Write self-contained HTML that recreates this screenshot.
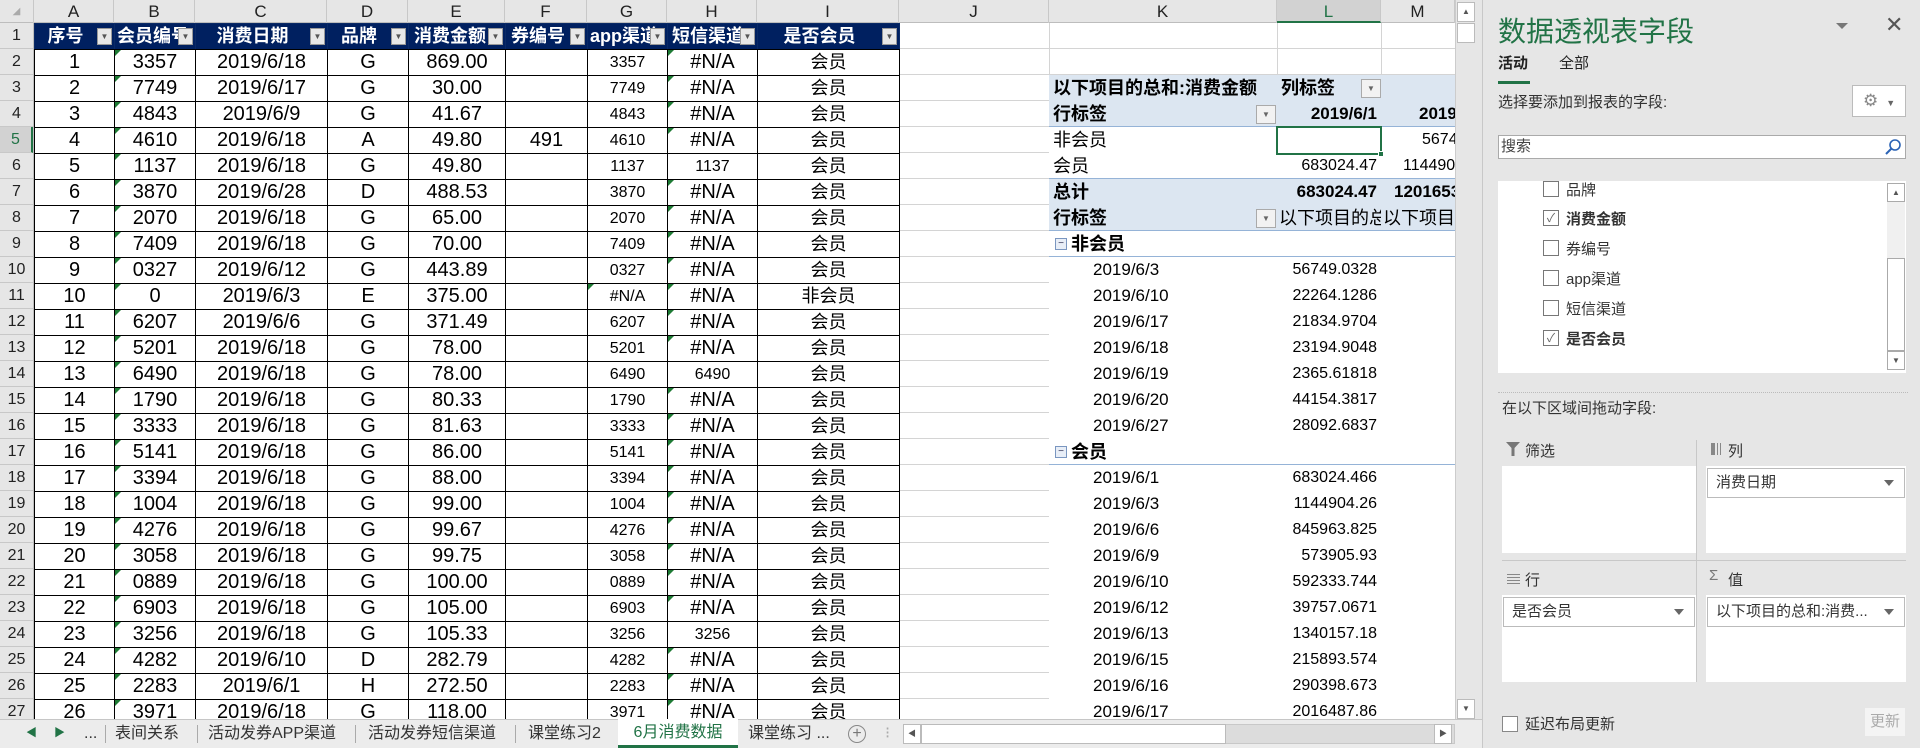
<!DOCTYPE html>
<html><head><meta charset="utf-8">
<style>
*{box-sizing:border-box;margin:0;padding:0}
body{width:1920px;height:748px;overflow:hidden;background:#fff;position:relative;font-family:"Liberation Sans","Noto Sans CJK SC",sans-serif;color:#000}
.abs{position:absolute}
#colhdr{left:0;top:0;width:1455px;height:23px;background:#e6e6e6;border-bottom:1px solid #bdbdbd}
.ch{position:absolute;top:0;height:23px;line-height:23px;text-align:center;font-size:17px;color:#222;border-right:1px solid #c8c8c8;font-family:"Liberation Sans Narrow","Liberation Sans",sans-serif}
#rowhdr{left:0;top:23px;width:34px;height:696px;background:#e6e6e6;border-right:1px solid #bdbdbd}
.rh{height:26px;line-height:26px;text-align:center;font-size:16px;color:#222;border-bottom:1px solid #c8c8c8;font-family:"Liberation Sans Narrow","Liberation Sans",sans-serif}
#grid{left:899px;top:23px;width:556px;height:696px;background:repeating-linear-gradient(to bottom,transparent 0,transparent 25px,#d4d4d4 25px,#d4d4d4 26px)}
.vl{position:absolute;top:23px;width:1px;height:696px;background:#d4d4d4}
table{position:absolute;left:34px;top:23px;width:865px;border-collapse:collapse;table-layout:fixed;font-family:"Liberation Sans","Noto Sans CJK SC",sans-serif}
td{height:25px;padding:0;border:1px solid #000;text-align:center;font-size:20px;white-space:nowrap;overflow:hidden;position:relative;line-height:25px}
td.g{font-size:16px}
td.i{font-size:18px}
tr.h td{background:#002060;color:#fff;font-weight:bold;font-size:18px;border-color:#0a2a66;border-bottom:1px solid #000;padding-right:18px;text-overflow:clip}
tr.h td b{position:absolute;right:2px;top:4px;width:15px;height:17px;background:#e8e8e8;border:1px solid #999;color:#555;font-size:8px;line-height:16px;text-align:center;font-weight:normal}
.t::before{content:"";position:absolute;left:0;top:0;border-top:6px solid #1e7b34;border-right:6px solid transparent}
.pv{position:absolute;font-size:18px;white-space:nowrap;line-height:26px;height:26px}
.nm{font-size:16px}
.bl{background:#dce6f1}
.dd{position:absolute;width:20px;height:19px;border:1px solid #aaa;background:#f2f2f2;font-size:8px;color:#666;text-align:center;line-height:18px}
.ps{position:absolute;font-size:17px;line-height:26px;white-space:nowrap}
.ps.v{font-size:16px}
#panel{left:1482px;top:0;width:438px;height:748px;background:#e6e6e6;border-left:1px solid #c8c8c8}
.cb{position:absolute;width:16px;height:16px;border:1px solid #777;background:#fff;font-size:12px;line-height:14px;text-align:center;color:#666}
.it{position:absolute;font-size:15px;color:#333;white-space:nowrap}
.box{position:absolute;background:#fff}
.fld{position:absolute;height:30px;border:1px solid #bbb;background:#fff;font-size:15px;line-height:28px;padding-left:8px;color:#333}
.fld i{position:absolute;right:10px;top:11px;border-top:6px solid #666;border-left:5px solid transparent;border-right:5px solid transparent}
#tabs{left:0;top:719px;width:1482px;height:29px;background:#ececec;border-top:1px solid #c6c6c6;font-size:16px;color:#333}
.tb{position:absolute;top:0;height:28px;line-height:27px;white-space:nowrap}
.sep{position:absolute;top:5px;width:1px;height:18px;background:#aaa}
</style></head><body>

<div id="colhdr" class="abs">
<div class="ch" style="left:0;width:34px;font-size:10px;color:#aaa">◢</div>
<div class="ch" style="left:34px;width:80px">A</div>
<div class="ch" style="left:114px;width:81px">B</div>
<div class="ch" style="left:195px;width:132px">C</div>
<div class="ch" style="left:327px;width:81px">D</div>
<div class="ch" style="left:408px;width:97px">E</div>
<div class="ch" style="left:505px;width:82px">F</div>
<div class="ch" style="left:587px;width:80px">G</div>
<div class="ch" style="left:667px;width:90px">H</div>
<div class="ch" style="left:757px;width:142px">I</div>
<div class="ch" style="left:899px;width:150px">J</div>
<div class="ch" style="left:1049px;width:228px">K</div>
<div class="ch" style="left:1277px;width:104px;background:#d2d2d2;border-bottom:2px solid #217346;color:#217346">L</div>
<div class="ch" style="left:1381px;width:74px">M</div>
</div>

<div id="rowhdr" class="abs">
<div class="rh">1</div><div class="rh">2</div><div class="rh">3</div><div class="rh">4</div>
<div class="rh" style="background:#d2d2d2;color:#217346;border-right:2px solid #217346">5</div>
<div class="rh">6</div><div class="rh">7</div><div class="rh">8</div><div class="rh">9</div><div class="rh">10</div>
<div class="rh">11</div><div class="rh">12</div><div class="rh">13</div><div class="rh">14</div><div class="rh">15</div>
<div class="rh">16</div><div class="rh">17</div><div class="rh">18</div><div class="rh">19</div><div class="rh">20</div>
<div class="rh">21</div><div class="rh">22</div><div class="rh">23</div><div class="rh">24</div><div class="rh">25</div>
<div class="rh">26</div><div class="rh">27</div>
</div>

<div id="grid" class="abs"></div>
<div class="vl" style="left:1049px"></div>
<div class="vl" style="left:1277px"></div>
<div class="vl" style="left:1381px"></div>

<table>
<colgroup><col style="width:80px"><col style="width:81px"><col style="width:132px"><col style="width:81px"><col style="width:97px"><col style="width:82px"><col style="width:80px"><col style="width:90px"><col style="width:142px"></colgroup>
<tr class="h"><td>序号<b>▼</b></td><td style="text-align:left;padding-left:2px">会员编号<b>▼</b></td><td>消费日期<b>▼</b></td><td>品牌<b>▼</b></td><td style="text-align:left;padding-left:5px">消费金额<b>▼</b></td><td style="text-align:left;padding-left:5px">券编号<b>▼</b></td><td style="text-align:left;padding-left:2px">app渠道<b>▼</b></td><td style="text-align:left;padding-left:4px">短信渠道<b>▼</b></td><td>是否会员<b>▼</b></td></tr>
<tr><td>1</td><td class="t">3357</td><td>2019/6/18</td><td>G</td><td>869.00</td><td></td><td class="g">3357</td><td class="t">#N/A</td><td class="i">会员</td></tr>
<tr><td>2</td><td class="t">7749</td><td>2019/6/17</td><td>G</td><td>30.00</td><td></td><td class="g">7749</td><td class="t">#N/A</td><td class="i">会员</td></tr>
<tr><td>3</td><td class="t">4843</td><td>2019/6/9</td><td>G</td><td>41.67</td><td></td><td class="g">4843</td><td class="t">#N/A</td><td class="i">会员</td></tr>
<tr><td>4</td><td class="t">4610</td><td>2019/6/18</td><td>A</td><td>49.80</td><td>491</td><td class="g">4610</td><td class="t">#N/A</td><td class="i">会员</td></tr>
<tr><td>5</td><td class="t">1137</td><td>2019/6/18</td><td>G</td><td>49.80</td><td></td><td class="g">1137</td><td class="g">1137</td><td class="i">会员</td></tr>
<tr><td>6</td><td class="t">3870</td><td>2019/6/28</td><td>D</td><td>488.53</td><td></td><td class="g">3870</td><td class="t">#N/A</td><td class="i">会员</td></tr>
<tr><td>7</td><td class="t">2070</td><td>2019/6/18</td><td>G</td><td>65.00</td><td></td><td class="g">2070</td><td class="t">#N/A</td><td class="i">会员</td></tr>
<tr><td>8</td><td class="t">7409</td><td>2019/6/18</td><td>G</td><td>70.00</td><td></td><td class="g">7409</td><td class="t">#N/A</td><td class="i">会员</td></tr>
<tr><td>9</td><td class="t">0327</td><td>2019/6/12</td><td>G</td><td>443.89</td><td></td><td class="g">0327</td><td class="t">#N/A</td><td class="i">会员</td></tr>
<tr><td>10</td><td class="t">0</td><td>2019/6/3</td><td>E</td><td>375.00</td><td></td><td class="g t">#N/A</td><td class="t">#N/A</td><td class="i">非会员</td></tr>
<tr><td>11</td><td class="t">6207</td><td>2019/6/6</td><td>G</td><td>371.49</td><td></td><td class="g">6207</td><td class="t">#N/A</td><td class="i">会员</td></tr>
<tr><td>12</td><td class="t">5201</td><td>2019/6/18</td><td>G</td><td>78.00</td><td></td><td class="g">5201</td><td class="t">#N/A</td><td class="i">会员</td></tr>
<tr><td>13</td><td class="t">6490</td><td>2019/6/18</td><td>G</td><td>78.00</td><td></td><td class="g">6490</td><td class="g">6490</td><td class="i">会员</td></tr>
<tr><td>14</td><td class="t">1790</td><td>2019/6/18</td><td>G</td><td>80.33</td><td></td><td class="g">1790</td><td class="t">#N/A</td><td class="i">会员</td></tr>
<tr><td>15</td><td class="t">3333</td><td>2019/6/18</td><td>G</td><td>81.63</td><td></td><td class="g">3333</td><td class="t">#N/A</td><td class="i">会员</td></tr>
<tr><td>16</td><td class="t">5141</td><td>2019/6/18</td><td>G</td><td>86.00</td><td></td><td class="g">5141</td><td class="t">#N/A</td><td class="i">会员</td></tr>
<tr><td>17</td><td class="t">3394</td><td>2019/6/18</td><td>G</td><td>88.00</td><td></td><td class="g">3394</td><td class="t">#N/A</td><td class="i">会员</td></tr>
<tr><td>18</td><td class="t">1004</td><td>2019/6/18</td><td>G</td><td>99.00</td><td></td><td class="g">1004</td><td class="t">#N/A</td><td class="i">会员</td></tr>
<tr><td>19</td><td class="t">4276</td><td>2019/6/18</td><td>G</td><td>99.67</td><td></td><td class="g">4276</td><td class="t">#N/A</td><td class="i">会员</td></tr>
<tr><td>20</td><td class="t">3058</td><td>2019/6/18</td><td>G</td><td>99.75</td><td></td><td class="g">3058</td><td class="t">#N/A</td><td class="i">会员</td></tr>
<tr><td>21</td><td class="t">0889</td><td>2019/6/18</td><td>G</td><td>100.00</td><td></td><td class="g">0889</td><td class="t">#N/A</td><td class="i">会员</td></tr>
<tr><td>22</td><td class="t">6903</td><td>2019/6/18</td><td>G</td><td>105.00</td><td></td><td class="g">6903</td><td class="t">#N/A</td><td class="i">会员</td></tr>
<tr><td>23</td><td class="t">3256</td><td>2019/6/18</td><td>G</td><td>105.33</td><td></td><td class="g">3256</td><td class="g">3256</td><td class="i">会员</td></tr>
<tr><td>24</td><td class="t">4282</td><td>2019/6/10</td><td>D</td><td>282.79</td><td></td><td class="g">4282</td><td class="t">#N/A</td><td class="i">会员</td></tr>
<tr><td>25</td><td class="t">2283</td><td>2019/6/1</td><td>H</td><td>272.50</td><td></td><td class="g">2283</td><td class="t">#N/A</td><td class="i">会员</td></tr>
<tr><td>26</td><td class="t">3971</td><td>2019/6/18</td><td>G</td><td>118.00</td><td></td><td class="g">3971</td><td class="t">#N/A</td><td class="i">会员</td></tr>
</table>

<!-- pivot -->
<div class="abs bl" style="left:1049px;top:75px;width:406px;height:52px;border-bottom:1px solid #95b3d7"></div>
<div class="abs" style="left:1049px;top:127px;width:406px;height:52px;background:#fff"></div>
<div class="abs bl" style="left:1049px;top:178px;width:406px;height:53px;border-top:1px solid #95b3d7;border-bottom:1px solid #95b3d7"></div>
<div class="abs" style="left:1049px;top:231px;width:406px;height:488px;background:#fff;overflow:hidden">
 <div class="abs" style="left:0;top:25px;width:406px;height:1px;background:#95b3d7"></div>
 <div class="abs" style="left:0;top:233px;width:406px;height:1px;background:#95b3d7"></div>
</div>
<div class="pv" style="left:1053px;top:75px;font-weight:bold">以下项目的总和:消费金额</div>
<div class="pv" style="left:1281px;top:75px;font-weight:bold">列标签</div>
<div class="dd" style="left:1361px;top:79px">▼</div>
<div class="pv" style="left:1053px;top:101px;font-weight:bold">行标签</div>
<div class="dd" style="left:1256px;top:105px">▼</div>
<div class="pv nm" style="left:1277px;top:101px;width:100px;text-align:right;font-weight:bold;font-size:17px">2019/6/1</div>
<div class="abs" style="left:1381px;top:75px;width:74px;height:156px;overflow:hidden">
 <div class="pv" style="left:38px;top:26px;font-weight:bold;font-size:17px">2019/6/3</div>
 <div class="pv nm" style="left:41px;top:52px">56749.03</div>
 <div class="pv nm" style="left:22px;top:78px">1144904.26</div>
 <div class="pv nm" style="left:13px;top:104px;font-weight:bold;font-size:17px">1201653.29</div>
 <div class="pv" style="left:2px;top:130px">以下项目的总和</div>
</div>
<div class="pv" style="left:1053px;top:127px">非会员</div>
<div class="pv" style="left:1053px;top:153px">会员</div>
<div class="pv nm" style="left:1277px;top:153px;width:100px;text-align:right">683024.47</div>
<div class="pv" style="left:1053px;top:179px;font-weight:bold">总计</div>
<div class="pv nm" style="left:1277px;top:179px;width:100px;text-align:right;font-weight:bold;font-size:17px">683024.47</div>
<div class="pv" style="left:1053px;top:205px;font-weight:bold">行标签</div>
<div class="dd" style="left:1256px;top:209px">▼</div>
<div class="abs" style="left:1279px;top:205px;width:102px;height:26px;overflow:hidden"><div class="pv" style="left:0;top:0">以下项目的总和</div></div>
<div class="abs" style="left:1276px;top:126px;width:106px;height:29px;border:2px solid #217346"></div>
<div class="abs" style="left:1378px;top:151px;width:6px;height:6px;background:#217346;border:1px solid #fff"></div>

<div class="abs" style="left:1055px;top:238px;width:12px;height:12px;border:1px solid #7a96c0;background:#e8eef7;font-size:10px;line-height:9px;text-align:center;color:#335">−</div>
<div class="pv" style="left:1071px;top:231px;font-weight:bold">非会员</div>
<div class="abs" style="left:1055px;top:446px;width:12px;height:12px;border:1px solid #7a96c0;background:#e8eef7;font-size:10px;line-height:9px;text-align:center;color:#335">−</div>
<div class="pv" style="left:1071px;top:439px;font-weight:bold">会员</div>

<div class="abs" style="left:1093px;top:257px;width:288px;height:462px;overflow:hidden">
<div class="ps" style="top:0">2019/6/3</div><div class="ps v" style="top:0;right:4px">56749.0328</div>
<div class="ps" style="top:26px">2019/6/10</div><div class="ps v" style="top:26px;right:4px">22264.1286</div>
<div class="ps" style="top:52px">2019/6/17</div><div class="ps v" style="top:52px;right:4px">21834.9704</div>
<div class="ps" style="top:78px">2019/6/18</div><div class="ps v" style="top:78px;right:4px">23194.9048</div>
<div class="ps" style="top:104px">2019/6/19</div><div class="ps v" style="top:104px;right:4px">2365.61818</div>
<div class="ps" style="top:130px">2019/6/20</div><div class="ps v" style="top:130px;right:4px">44154.3817</div>
<div class="ps" style="top:156px">2019/6/27</div><div class="ps v" style="top:156px;right:4px">28092.6837</div>
<div class="ps" style="top:208px">2019/6/1</div><div class="ps v" style="top:208px;right:4px">683024.466</div>
<div class="ps" style="top:234px">2019/6/3</div><div class="ps v" style="top:234px;right:4px">1144904.26</div>
<div class="ps" style="top:260px">2019/6/6</div><div class="ps v" style="top:260px;right:4px">845963.825</div>
<div class="ps" style="top:286px">2019/6/9</div><div class="ps v" style="top:286px;right:4px">573905.93</div>
<div class="ps" style="top:312px">2019/6/10</div><div class="ps v" style="top:312px;right:4px">592333.744</div>
<div class="ps" style="top:338px">2019/6/12</div><div class="ps v" style="top:338px;right:4px">39757.0671</div>
<div class="ps" style="top:364px">2019/6/13</div><div class="ps v" style="top:364px;right:4px">1340157.18</div>
<div class="ps" style="top:390px">2019/6/15</div><div class="ps v" style="top:390px;right:4px">215893.574</div>
<div class="ps" style="top:416px">2019/6/16</div><div class="ps v" style="top:416px;right:4px">290398.673</div>
<div class="ps" style="top:442px">2019/6/17</div><div class="ps v" style="top:442px;right:4px">2016487.86</div>
</div>

<!-- vertical scrollbar -->
<div class="abs" style="left:1455px;top:0;width:27px;height:719px;background:#e6e6e6;border-left:1px solid #ccc"></div>
<div class="abs" style="left:1457px;top:2px;width:18px;height:20px;border:1px solid #bbb;background:#fff;font-size:8px;text-align:center;line-height:18px;color:#555">▲</div>
<div class="abs" style="left:1457px;top:23px;width:18px;height:20px;border:1px solid #bbb;background:#fff"></div>
<div class="abs" style="left:1457px;top:699px;width:18px;height:20px;border:1px solid #bbb;background:#fff;font-size:8px;text-align:center;line-height:18px;color:#555">▼</div>

<!-- tabs -->
<div id="tabs" class="abs">
 <div class="tb" style="left:26px;color:#217346;font-size:11px">◀</div>
 <div class="tb" style="left:54px;color:#217346;font-size:11px">▶</div>
 <div class="tb" style="left:84px">...</div>
 <div class="sep" style="left:105px"></div>
 <div class="tb" style="left:115px">表间关系</div>
 <div class="sep" style="left:197px"></div>
 <div class="tb" style="left:208px">活动发券APP渠道</div>
 <div class="sep" style="left:355px"></div>
 <div class="tb" style="left:368px">活动发券短信渠道</div>
 <div class="sep" style="left:515px"></div>
 <div class="tb" style="left:528px">课堂练习2</div>
 <div class="tb" style="left:618px;width:120px;background:#fff;color:#217346;text-align:center;border-bottom:3px solid #217346;top:-1px;height:29px">6月消费数据</div>
 <div class="tb" style="left:748px">课堂练习 ...</div>
 <div class="abs" style="left:848px;top:5px;width:18px;height:18px;border:1px solid #888;border-radius:50%;text-align:center;line-height:15px;color:#777;font-size:16px">+</div>
 <div class="tb" style="left:885px;color:#aaa">⁝</div>
 <div class="abs" style="left:903px;top:4px;width:552px;height:20px;background:#dcdcdc;border:1px solid #c8c8c8"></div>
 <div class="abs" style="left:903px;top:4px;width:18px;height:20px;background:#fff;border:1px solid #bbb;font-size:8px;line-height:18px;text-align:center;color:#555">◀</div>
 <div class="abs" style="left:921px;top:4px;width:305px;height:20px;background:#fff;border:1px solid #bbb"></div>
 <div class="abs" style="left:1434px;top:4px;width:18px;height:20px;background:#fff;border:1px solid #bbb;font-size:8px;line-height:18px;text-align:center;color:#555">▶</div>
</div>

<!-- panel -->
<div id="panel" class="abs">
 <div class="abs" style="left:15px;top:10px;font-size:28px;color:#217346;white-space:nowrap">数据透视表字段</div>
 <div class="abs" style="left:353px;top:23px;border-top:6px solid #777;border-left:6px solid transparent;border-right:6px solid transparent"></div>
 <div class="abs" style="left:402px;top:12px;font-size:22px;color:#555">✕</div>
 <div class="abs" style="left:15px;top:52px;font-size:15px;font-weight:bold;color:#222">活动</div>
 <div class="abs" style="left:15px;top:81px;width:32px;height:3px;background:#217346"></div>
 <div class="abs" style="left:76px;top:52px;font-size:15px;color:#222">全部</div>
 <div class="abs" style="left:15px;top:91px;font-size:15px;color:#333">选择要添加到报表的字段:</div>
 <div class="abs" style="left:369px;top:85px;width:54px;height:32px;border:1px solid #bbb;background:#fff;color:#888;font-size:17px;line-height:30px;padding-left:10px">⚙<span style="font-size:9px;margin-left:8px;color:#666">▼</span></div>
 <div class="abs" style="left:15px;top:135px;width:408px;height:24px;border:1px solid #aaa;background:#fff;font-size:15px;line-height:22px;padding-left:2px;color:#444">搜索
  <svg class="abs" style="right:3px;top:2px" width="18" height="18" viewBox="0 0 18 18"><circle cx="11" cy="7" r="5" fill="none" stroke="#2b63b5" stroke-width="1.6"/><path d="M7.5 10.5 L2 16" stroke="#2b63b5" stroke-width="2"/></svg></div>
 <div class="box" style="left:15px;top:181px;width:408px;height:192px;overflow:hidden">
  <div class="cb" style="left:45px;top:0px"></div><div class="it" style="left:68px;top:-2px">品牌</div>
  <div class="cb" style="left:45px;top:29px">✓</div><div class="it" style="left:68px;top:27px;font-weight:bold">消费金额</div>
  <div class="cb" style="left:45px;top:59px"></div><div class="it" style="left:68px;top:57px">券编号</div>
  <div class="cb" style="left:45px;top:89px"></div><div class="it" style="left:68px;top:87px">app渠道</div>
  <div class="cb" style="left:45px;top:119px"></div><div class="it" style="left:68px;top:117px">短信渠道</div>
  <div class="cb" style="left:45px;top:149px">✓</div><div class="it" style="left:68px;top:147px;font-weight:bold">是否会员</div>
  <div class="abs" style="left:389px;top:2px;width:18px;height:186px;background:#f0f0f0"></div>
  <div class="abs" style="left:389px;top:2px;width:18px;height:19px;border:1px solid #aaa;background:#fff;font-size:8px;text-align:center;line-height:17px;color:#555">▲</div>
  <div class="abs" style="left:389px;top:77px;width:18px;height:93px;border:1px solid #aaa;background:#fff"></div>
  <div class="abs" style="left:389px;top:170px;width:18px;height:19px;border:1px solid #aaa;background:#fff;font-size:8px;text-align:center;line-height:17px;color:#555">▼</div>
 </div>
 <div class="abs" style="left:15px;top:392px;width:410px;border-top:1px dotted #bbb"></div>
 <div class="abs" style="left:19px;top:397px;font-size:15px;color:#333">在以下区域间拖动字段:</div>
 <svg class="abs" style="left:23px;top:442px" width="14" height="14" viewBox="0 0 14 14"><path d="M0 0H14L8.5 6V14H5.5V6Z" fill="#777"/></svg>
 <div class="abs" style="left:42px;top:440px;font-size:15px;color:#333">筛选</div>
 <div class="abs" style="left:228px;top:443px;width:10px;height:12px;border-left:3px solid #888;border-right:1px solid #888;background:repeating-linear-gradient(to right,#888 0 1px,transparent 1px 3px)"></div>
 <div class="abs" style="left:245px;top:440px;font-size:15px;color:#333">列</div>
 <div class="box" style="left:19px;top:466px;width:194px;height:87px"></div>
 <div class="box" style="left:223px;top:466px;width:200px;height:87px"></div>
 <div class="fld" style="left:224px;top:468px;width:198px">消费日期<i></i></div>
 <div class="abs" style="left:19px;top:560px;width:404px;height:1px;background:#c8c8c8"></div>
 <div class="abs" style="left:213px;top:440px;width:1px;height:242px;background:#c8c8c8"></div>
 <div class="abs" style="left:24px;top:574px;width:13px;height:10px;background:repeating-linear-gradient(to bottom,#888 0 1px,transparent 1px 3px)"></div>
 <div class="abs" style="left:42px;top:569px;font-size:15px;color:#333">行</div>
 <div class="abs" style="left:226px;top:567px;font-size:15px;color:#777">Σ</div>
 <div class="abs" style="left:245px;top:569px;font-size:15px;color:#333">值</div>
 <div class="box" style="left:19px;top:595px;width:194px;height:87px"></div>
 <div class="box" style="left:223px;top:595px;width:200px;height:87px"></div>
 <div class="fld" style="left:20px;top:597px;width:192px">是否会员<i></i></div>
 <div class="fld" style="left:224px;top:597px;width:198px">以下项目的总和:消费...<i></i></div>
 <div class="abs" style="left:19px;top:716px;width:16px;height:16px;border:1px solid #888;background:#fff"></div>
 <div class="abs" style="left:42px;top:713px;font-size:15px;color:#333">延迟布局更新</div>
 <div class="abs" style="left:382px;top:708px;width:40px;height:28px;background:#f4f4f4;color:#aaa;font-size:15px;line-height:28px;text-align:center">更新</div>
</div>
</body></html>
